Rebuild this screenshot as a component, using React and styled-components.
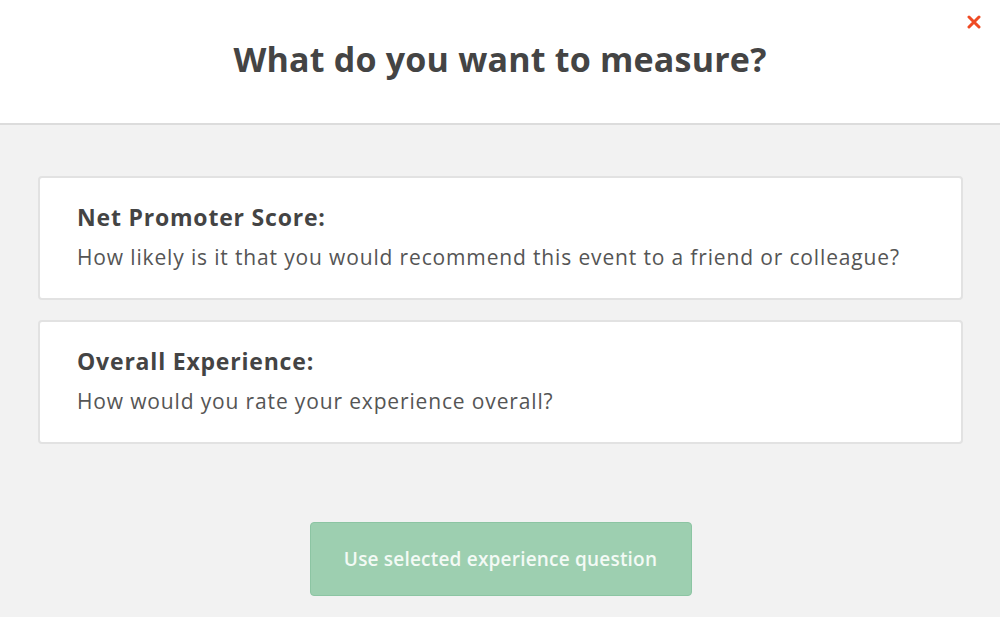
import React from "react";
import styled, { createGlobalStyle } from "styled-components";

const Global = createGlobalStyle`
  html, body { margin: 0; padding: 0; }
  body { font-family: "Open Sans", "Lato", sans-serif; background: #f2f2f2; }
  * { box-sizing: border-box; }
`;

const Page = styled.div`
  width: 1000px;
  height: 617px;
  display: flex;
  flex-direction: column;
  background: #f2f2f2;
  overflow: hidden;
`;

const Header = styled.header`
  position: relative;
  height: 125px;
  background: #fff;
  border-bottom: 2px solid #dcdcdc;
  display: flex;
  align-items: center;
  justify-content: center;
`;

const Title = styled.h1`
  margin: 0 0 6px;
  font-size: 34px;
  font-weight: 700;
  color: #444;
  letter-spacing: 0.2px;
`;

const Close = styled.button`
  position: absolute;
  top: 12px;
  right: 16px;
  width: 20px;
  height: 20px;
  padding: 0;
  border: 0;
  background: none;
  display: flex;
  align-items: center;
  justify-content: center;
`;

const Body = styled.main`
  flex: 1;
  padding: 51px 37px 0 38px;
  display: flex;
  flex-direction: column;
  gap: 20px;
`;

const Card = styled.div`
  height: 124px;
  background: #fff;
  border: 2px solid #e2e2e2;
  border-radius: 4px;
  padding: 24px 37px 0;
`;

const CardTitle = styled.div`
  font-size: 23px;
  font-weight: 700;
  color: #444;
  line-height: 30px;
  letter-spacing: 0.8px;
`;

const CardText = styled.div`
  margin-top: 10px;
  font-size: 21px;
  color: #555;
  line-height: 30px;
  letter-spacing: 0.85px;
`;

const Footer = styled.div`
  display: flex;
  justify-content: center;
  margin-top: 58px;
`;

const Button = styled.button`
  width: 382px;
  height: 74px;
  border: 1px solid #8cc5a3;
  border-radius: 4px;
  background: #9dcfb0;
  color: #f3faf5;
  font-family: inherit;
  font-size: 19px;
  font-weight: 600;
  letter-spacing: 0.2px;
`;

const items = [
  {
    title: "Net Promoter Score:",
    text: "How likely is it that you would recommend this event to a friend or colleague?",
  },
  { title: "Overall Experience:", text: "How would you rate your experience overall?" },
];

export default function App() {
  return (
    <Page>
      <Global />
      <Header>
        <Title>What do you want to measure?</Title>
        <Close aria-label="close">
          <svg width="14" height="14" viewBox="0 0 14 14">
            <path d="M2 2 L12 12 M12 2 L2 12" stroke="#ef4b24" strokeWidth="3" strokeLinecap="round" />
          </svg>
        </Close>
      </Header>
      <Body>
        {items.map((it) => (
          <Card key={it.title}>
            <CardTitle>{it.title}</CardTitle>
            <CardText>{it.text}</CardText>
          </Card>
        ))}
        <Footer>
          <Button>Use selected experience question</Button>
        </Footer>
      </Body>
    </Page>
  );
}
